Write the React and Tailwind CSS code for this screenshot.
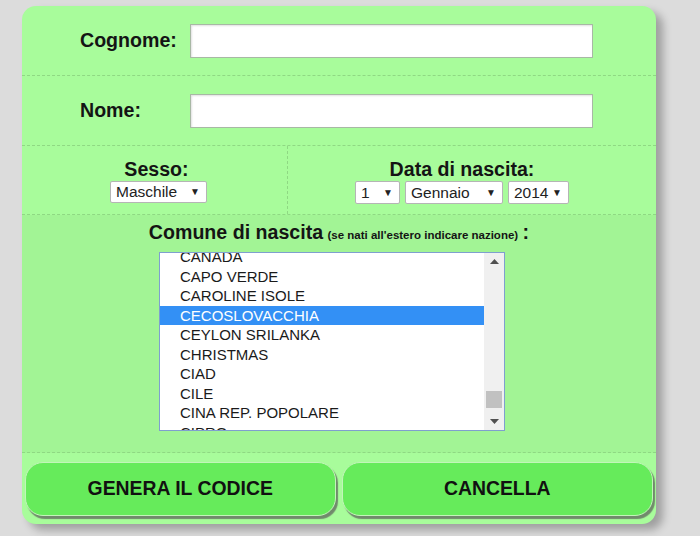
import React from "react";

const items = [
  "CANADA",
  "CAPO VERDE",
  "CAROLINE ISOLE",
  "CECOSLOVACCHIA",
  "CEYLON SRILANKA",
  "CHRISTMAS",
  "CIAD",
  "CILE",
  "CINA REP. POPOLARE",
  "CIPRO",
];

function Sel({ w, label, h = "h-[22px]" }) {
  return (
    <div
      className={`${w} ${h} flex items-center justify-between bg-white border border-[#b5b5b5] rounded-[2px] pl-[5px] pr-[6px] text-[15.5px] leading-none text-[#222]`}
    >
      <span>{label}</span>
      <span className="text-[10px] text-[#222]">▼</span>
    </div>
  );
}

export default function App() {
  const font = { fontFamily: '"Liberation Sans", Arial, sans-serif' };
  return (
    <div
      className="w-[700px] h-[536px] bg-[#dcdcdc] pl-[22px] pt-[6px] overflow-hidden"
      style={font}
    >
      <div className="w-[634px] h-[518px] rounded-[14px] bg-[#a8fc9b] shadow-[7px_6px_8px_rgba(0,0,0,0.28)] flex flex-col overflow-hidden text-[#141414]">
        {/* Cognome */}
        <div className="h-[70px] flex items-center border-b border-dashed border-[#8fd883] pl-[58px]">
          <div className="w-[110px] font-bold text-[19.6px]">Cognome:</div>
          <div className="w-[403px] h-[34px] bg-white border border-[#a8b8a5] shadow-[inset_1px_1px_2px_rgba(0,0,0,0.12)]" />
        </div>
        {/* Nome */}
        <div className="h-[70px] flex items-center border-b border-dashed border-[#8fd883] pl-[58px]">
          <div className="w-[110px] font-bold text-[19.6px]">Nome:</div>
          <div className="w-[403px] h-[34px] bg-white border border-[#a8b8a5] shadow-[inset_1px_1px_2px_rgba(0,0,0,0.12)]" />
        </div>
        {/* Sesso / Data */}
        <div className="h-[69px] flex border-b border-dashed border-[#8fd883]">
          <div className="w-[266px] border-r border-dashed border-[#8fd883] flex flex-col items-center pt-[12px]">
            <div className="font-bold text-[19.6px] leading-[22px] pl-[4px]">Sesso:</div>
            <div className="mt-[1px] pl-[8px]">
              <Sel w="w-[97px]" label="Maschile" />
            </div>
          </div>
          <div className="flex-1 flex flex-col items-center pt-[12px] pr-[20px]">
            <div className="font-bold text-[19.6px] leading-[22px]">Data di nascita:</div>
            <div className="mt-[1px] flex gap-[5px]">
              <Sel w="w-[45px]" h="h-[23px]" label="1" />
              <Sel w="w-[98px]" h="h-[23px]" label="Gennaio" />
              <Sel w="w-[61px]" h="h-[23px]" label="2014" />
            </div>
          </div>
        </div>
        {/* Comune */}
        <div className="h-[238px] bg-[#a2f495] border-b border-dashed border-[#8fd883] flex flex-col pt-[6px]">
          <div className="text-center leading-[22px] font-bold">
            <span className="text-[19.6px]">Comune di nascita</span>{" "}
            <span className="text-[11.5px]">(se nati all'estero indicare nazione)</span>{" "}
            <span className="text-[19.6px]">:</span>
          </div>
          <div className="ml-[137px] mt-[6px] w-[346px] h-[179px] bg-white border border-[#7f9fcf] flex overflow-hidden">
            <div className="flex-1 overflow-hidden">
              <div className="-mt-[6px]">
                {items.map((it) => (
                  <div
                    key={it}
                    className={`h-[19.5px] leading-[19.5px] pl-[20px] text-[15px] ${
                      it === "CECOSLOVACCHIA"
                        ? "bg-[#3390f5] text-white"
                        : "text-[#1a1a1a]"
                    }`}
                  >
                    {it}
                  </div>
                ))}
              </div>
            </div>
            <div className="w-[20px] bg-[#f0f0f0] flex flex-col items-center">
              <div className="h-[17px] flex items-center justify-center">
                <svg width="9" height="5" viewBox="0 0 9 5">
                  <path d="M0 5 L4.5 0 L9 5 Z" fill="#505050" />
                </svg>
              </div>
              <div className="flex-1 w-full flex flex-col">
                <div className="h-[121px]" />
                <div className="h-[17px] mx-[2px] bg-[#c1c1c1]" />
              </div>
              <div className="h-[17px] flex items-center justify-center">
                <svg width="9" height="5" viewBox="0 0 9 5">
                  <path d="M0 0 L9 0 L4.5 5 Z" fill="#505050" />
                </svg>
              </div>
            </div>
          </div>
        </div>
        {/* Buttons */}
        <div className="flex gap-[6px] px-[3px] pt-[9px]">
          <div className="w-[311px] h-[54px] rounded-[18px] bg-[#66eb5b] border border-[#c2f5b9] shadow-[2px_3px_1px_#718a6c] flex items-center justify-center font-bold text-[19.4px] text-[#111]">
            GENERA IL CODICE
          </div>
          <div className="w-[312px] h-[54px] rounded-[18px] bg-[#66eb5b] border border-[#c2f5b9] shadow-[2px_3px_1px_#718a6c] flex items-center justify-center font-bold text-[19.4px] text-[#111]">
            CANCELLA
          </div>
        </div>
      </div>
    </div>
  );
}
